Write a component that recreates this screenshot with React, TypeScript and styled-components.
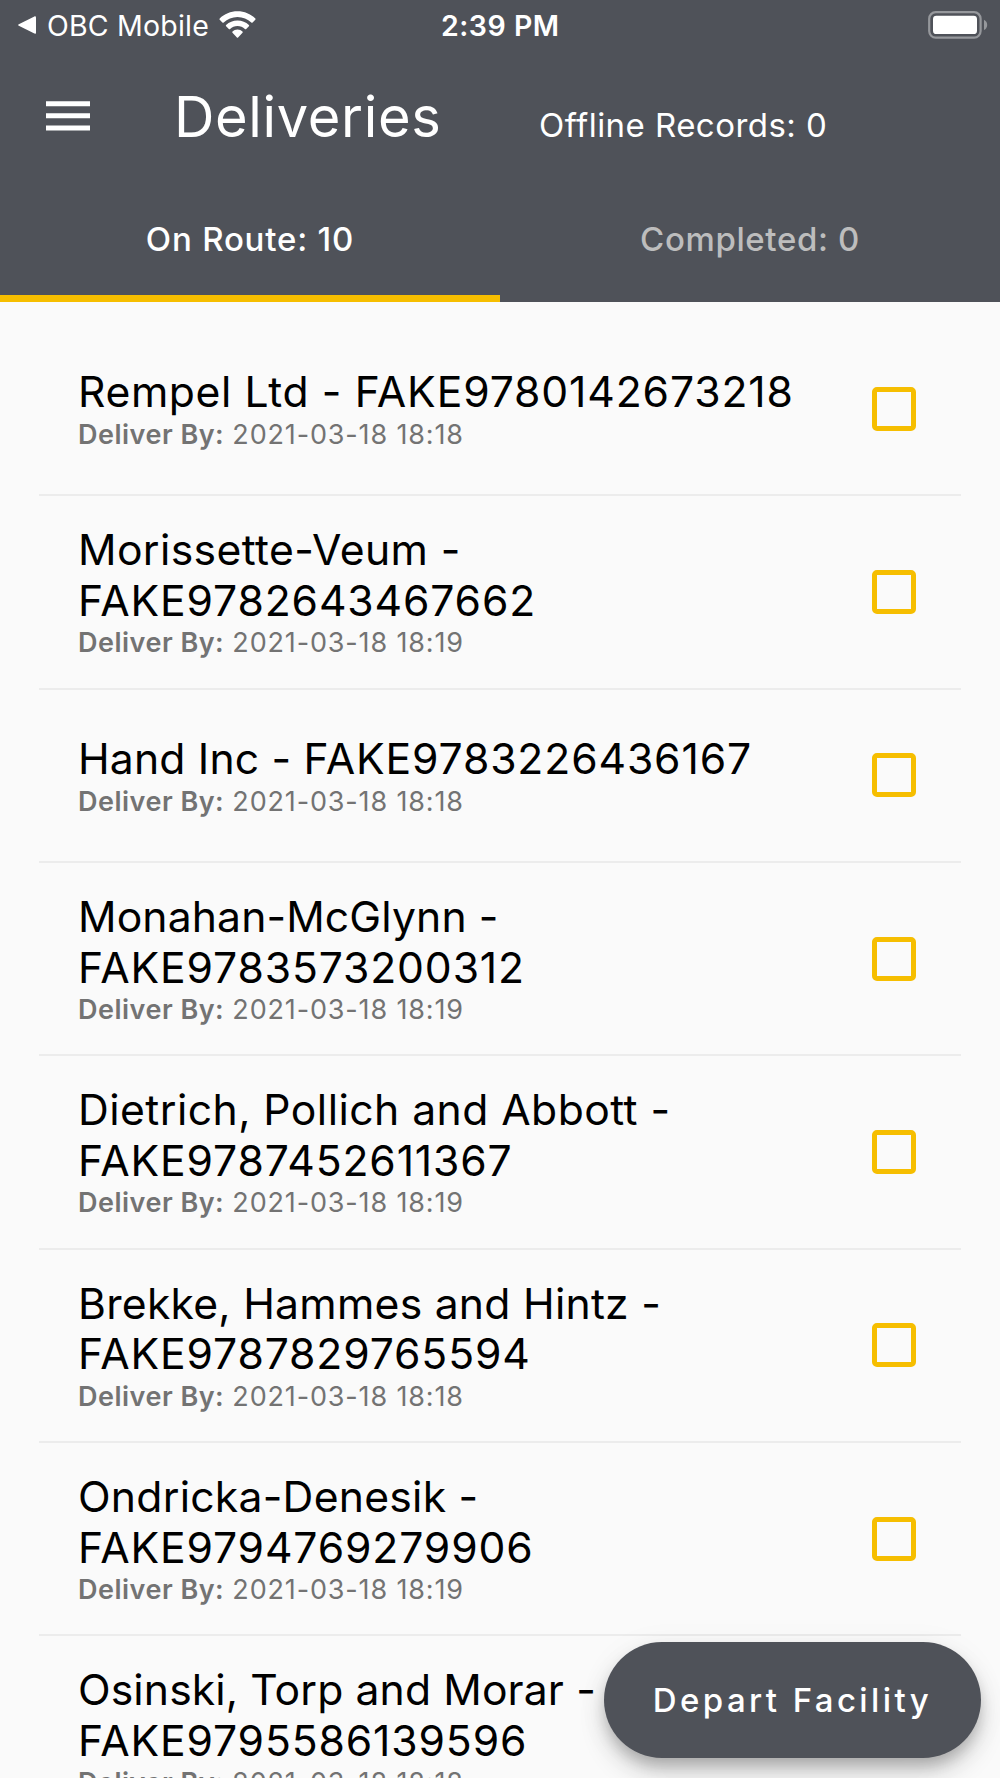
import React, { FC } from 'react';
import styled, { ThemeProvider, createGlobalStyle } from 'styled-components';

interface Delivery {
  name: string;
  code: string;
  deliverBy: string;
  tracking: number;
}

const theme = {
  white: '#ffffff',
  black: '#000000',
  primary: '#4f5259',
  accent: '#f6be00',
  background: '#fafafa',
  muted: '#bdbdbd',
  grey: '#737373',
  divider: '#ececec',
};

const deliveries: Delivery[] = [
  { name: 'Rempel Ltd', code: 'FAKE9780142673218', deliverBy: '2021-03-18 18:18', tracking: 0.6 },
  { name: 'Morissette-Veum', code: 'FAKE9782643467662', deliverBy: '2021-03-18 18:19', tracking: 0.38 },
  { name: 'Hand Inc', code: 'FAKE9783226436167', deliverBy: '2021-03-18 18:18', tracking: 0.17 },
  { name: 'Monahan-McGlynn', code: 'FAKE9783573200312', deliverBy: '2021-03-18 18:19', tracking: 0.12 },
  { name: 'Dietrich, Pollich and Abbott', code: 'FAKE9787452611367', deliverBy: '2021-03-18 18:19', tracking: 0.45 },
  { name: 'Brekke, Hammes and Hintz', code: 'FAKE9787829765594', deliverBy: '2021-03-18 18:18', tracking: 0.25 },
  { name: 'Ondricka-Denesik', code: 'FAKE9794769279906', deliverBy: '2021-03-18 18:19', tracking: 0.25 },
  { name: 'Osinski, Torp and Morar', code: 'FAKE9795586139596', deliverBy: '2021-03-18 18:18', tracking: 0.12 },
];

const WifiIcon = (): JSX.Element => (
  <svg width="37" height="28" viewBox="0 0 37 28" fill="#fff">
    <path d="M18.5 0.3C25.4 0.3 31.7 3 36.3 7.4C36.7 7.8 36.7 8.3 36.3 8.7L33.6 11.4C33.2 11.8 32.7 11.8 32.3 11.4C28.7 8 23.8 5.9 18.5 5.9C13.2 5.9 8.3 8 4.7 11.4C4.3 11.8 3.8 11.8 3.4 11.4L0.7 8.7C0.3 8.3 0.3 7.8 0.7 7.4C5.3 3 11.6 0.3 18.5 0.3Z" />
    <path d="M18.5 9.5C22.9 9.5 26.9 11.2 29.9 14C30.3 14.4 30.3 14.9 29.9 15.3L27.2 18C26.8 18.4 26.3 18.4 25.9 18C24 16.2 21.4 15 18.5 15C15.6 15 13 16.2 11.1 18C10.7 18.4 10.2 18.4 9.8 18L7.1 15.3C6.7 14.9 6.7 14.4 7.1 14C10.1 11.2 14.1 9.5 18.5 9.5Z" />
    <path d="M18.5 18.5C20.5 18.5 22.2 19.3 23.5 20.5C23.9 20.9 23.9 21.4 23.5 21.8L19.1 26.4C18.7 26.8 18.3 26.8 17.9 26.4L13.5 21.8C13.1 21.4 13.1 20.9 13.5 20.5C14.8 19.3 16.5 18.5 18.5 18.5Z" />
  </svg>
);

const BatteryIcon = (): JSX.Element => (
  <svg width="60" height="28" viewBox="0 0 60 28">
    <rect x="1.2" y="1.2" width="51.4" height="25.4" rx="6.5" fill="none" stroke="#96989c" strokeWidth="2.2" />
    <rect x="5" y="4.7" width="44" height="18.4" rx="3.4" fill="#fff" />
    <path d="M56 8.8C58 9.8 59.2 11.7 59.2 13.9C59.2 16.1 58 18.1 56 19Z" fill="#96989c" />
  </svg>
);

const DeliveryItem: FC<{ delivery: Delivery }> = ({ delivery }) => (
  <Row>
    <Details>
      <Name $tracking={delivery.tracking}>
        {delivery.name} - <Code>{delivery.code}</Code>
      </Name>
      <DeliverBy>
        <b>Deliver By:</b> <DateText>{delivery.deliverBy}</DateText>
      </DeliverBy>
    </Details>
    <Checkbox role="checkbox" aria-checked={false} />
  </Row>
);

const App: FC = () => (
  <ThemeProvider theme={theme}>
    <GlobalStyle />
    <Screen>
      <Header>
        <StatusBar>
          <BackToApp>
            <svg width="18" height="18" viewBox="0 0 18 18" fill="#fff">
              <path d="M0.8 8.2L16.4 0.4C17.3 0 18 0.4 18 1.3V16.7C18 17.6 17.3 18 16.4 17.6L0.8 9.8C0 9.4 0 8.6 0.8 8.2Z" />
            </svg>
            <StatusText>OBC Mobile</StatusText>
            <WifiIcon />
          </BackToApp>
          <Clock>2:39 PM</Clock>
          <BatteryIcon />
        </StatusBar>
        <Toolbar>
          <svg width="44" height="30" viewBox="0 0 44 30" fill="#fff">
            <path d="M0 0.3h44v5H0zM0 12.3h44v5H0zM0 24.4h44v5H0z" />
          </svg>
          <Title>Deliveries</Title>
          <Offline>Offline Records: 0</Offline>
        </Toolbar>
        <Tabs>
          <Tab $active>On Route: 10</Tab>
          <Tab>Completed: 0</Tab>
        </Tabs>
      </Header>
      <List>
        {deliveries.map((delivery) => (
          <DeliveryItem key={delivery.code} delivery={delivery} />
        ))}
      </List>
      <DepartButton>Depart Facility</DepartButton>
    </Screen>
  </ThemeProvider>
);

const GlobalStyle = createGlobalStyle`
  * {
    box-sizing: border-box;
  }
  body {
    margin: 0;
    overflow: hidden;
    font-family: Inter, 'Liberation Sans', sans-serif;
  }
  svg {
    display: block;
    flex: none;
  }
`;

const Screen = styled.div`
  position: relative;
  width: 1000px;
  height: 1778px;
  overflow: hidden;
  background-color: ${({ theme }): string => theme.background};
`;
const Header = styled.header`
  display: flex;
  flex-direction: column;
  height: 302px;
  color: ${({ theme }): string => theme.white};
  background-color: ${({ theme }): string => theme.primary};
`;
const StatusBar = styled.div`
  display: grid;
  grid-template-columns: 423px 1fr 60px;
  align-items: center;
  height: 53px;
  padding: 0 12px 4px 18px;
`;
const BackToApp = styled.div`
  display: flex;
  align-items: center;
`;
const StatusText = styled.span`
  width: 162px;
  margin: 2px 10px 0 11px;
  font-size: 28.5px;
  letter-spacing: 0.2px;
  white-space: nowrap;
`;
const Clock = styled.span`
  margin-top: 2px;
  font-size: 28.5px;
  font-weight: 600;
  letter-spacing: 0.5px;
  white-space: nowrap;
`;
const Toolbar = styled.div`
  display: flex;
  align-items: baseline;
  height: 103px;
  padding: 30px 0 0 46px;
  & > svg {
    position: relative;
    top: -6px;
  }
`;
const Title = styled.h1`
  margin: 0 0 0 84px;
  width: 365px;
  font-size: 56px;
  font-weight: 400;
  letter-spacing: 0.65px;
  white-space: nowrap;
`;
const Offline = styled.span`
  font-size: 33px;
  letter-spacing: 0.45px;
  white-space: nowrap;
`;
const Tabs = styled.div`
  display: flex;
  height: 146px;
`;
const Tab = styled.div<{ $active?: boolean }>`
  display: flex;
  flex: 1 1 0;
  align-items: center;
  justify-content: center;
  padding-top: 26px;
  font-size: 33px;
  font-weight: 500;
  letter-spacing: ${({ $active }): string => ($active ? '0.8px' : '0.62px')};
  color: ${({ theme, $active }): string => ($active ? theme.white : theme.muted)};
  border-bottom: 7px solid ${({ theme, $active }): string => ($active ? theme.accent : 'transparent')};
`;

const List = styled.div`
  padding: 21px 39px 0;
`;
const Row = styled.div`
  display: flex;
  align-items: center;
  justify-content: space-between;
  min-height: 173.33px;
  padding: 29.16px 45px 29.17px 39px;
  border-bottom: 2px solid ${({ theme }): string => theme.divider};
`;
const Details = styled.div`
  width: 750px;
`;
const Name = styled.div<{ $tracking: number }>`
  font-size: 42.67px;
  line-height: 50.5px;
  letter-spacing: ${({ $tracking }): string => `${$tracking}px`};
  color: ${({ theme }): string => theme.black};
`;
const Code = styled.span`
  letter-spacing: 0.87px;
`;
const DeliverBy = styled.div`
  padding-top: 1px;
  font-size: 27px;
  line-height: 31px;
  letter-spacing: 0.5px;
  color: ${({ theme }): string => theme.grey};
  b {
    font-weight: 600;
  }
`;
const DateText = styled.span`
  letter-spacing: 0.85px;
`;
const Checkbox = styled.div`
  width: 44px;
  height: 44px;
  border: 5px solid ${({ theme }): string => theme.accent};
  border-radius: 5px;
`;
const DepartButton = styled.button`
  position: absolute;
  right: 19px;
  bottom: 20px;
  width: 377px;
  height: 116px;
  padding: 0;
  border: none;
  border-radius: 58px;
  font-family: inherit;
  font-size: 33px;
  font-weight: 500;
  letter-spacing: 3.4px;
  color: ${({ theme }): string => theme.white};
  background-color: ${({ theme }): string => theme.primary};
  box-shadow: 0 9px 14px -2px rgba(0, 0, 0, 0.2), 0 16px 27px rgba(0, 0, 0, 0.14), 0 4px 32px rgba(0, 0, 0, 0.05);
`;

export default App;
